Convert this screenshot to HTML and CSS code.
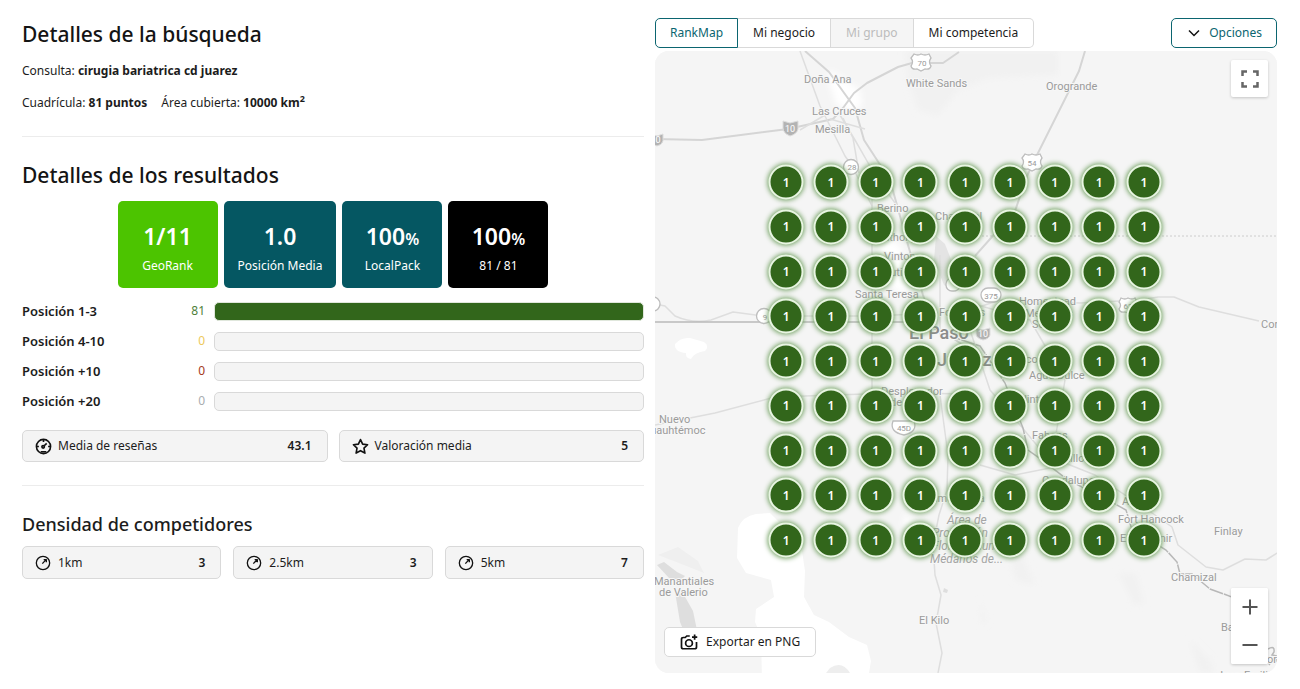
FILE: index.html
```html
<!DOCTYPE html>
<html lang="es">
<head>
<meta charset="utf-8">
<title>RankMap</title>
<meta name="viewport" content="width=device-width, initial-scale=1">
<link rel="stylesheet" href="styles.css">
</head>
<body>
<main class="page">
  <section class="details">
    <h1 class="title">Detalles de la búsqueda</h1>
    <p class="info">Consulta: <strong>cirugia bariatrica cd juarez</strong></p>
    <p class="info info-row"><span>Cuadrícula: <strong>81 puntos</strong></span><span>Área cubierta: <strong>10000 km<sup>2</sup></strong></span></p>
    <hr class="rule">
    <h2 class="title">Detalles de los resultados</h2>
    <div class="scores">
      <div class="score score-green"><div class="score-value">1/11</div><div class="score-label">GeoRank</div></div>
      <div class="score score-teal"><div class="score-value">1.0</div><div class="score-label">Posición Media</div></div>
      <div class="score score-teal"><div class="score-value">100<small>%</small></div><div class="score-label">LocalPack</div></div>
      <div class="score score-black"><div class="score-value">100<small>%</small></div><div class="score-label">81 / 81</div></div>
    </div>
    <div class="bars">
      <div class="bar-row"><strong>Posición 1-3</strong><span class="count count-green">81</span><div class="track track-full"></div></div>
      <div class="bar-row"><strong>Posición 4-10</strong><span class="count count-yellow">0</span><div class="track"></div></div>
      <div class="bar-row"><strong>Posición +10</strong><span class="count count-red">0</span><div class="track"></div></div>
      <div class="bar-row"><strong>Posición +20</strong><span class="count count-grey">0</span><div class="track"></div></div>
    </div>
    <div class="stats">
      <div class="stat">
        <svg class="icon" viewBox="0 0 24 24"><circle cx="12" cy="12" r="10"/><path d="M12 2v3.500M2 12h3.500M18.500 12H22M16.500 7.500L13 11"/><circle cx="11.500" cy="12.500" r="1.800"/><path d="M8 19.500h8"/></svg>
        <span>Media de reseñas</span><b>43.1</b>
      </div>
      <div class="stat">
        <svg class="icon" viewBox="0 0 24 24"><path d="M12 2.200l3 6.400 7 .9-5.100 4.800 1.300 7L12 17.900l-6.200 3.400 1.300-7L2 9.500l7-.9z"/></svg>
        <span>Valoración media</span><b>5</b>
      </div>
    </div>
    <hr class="rule rule-last">
    <h3 class="subtitle">Densidad de competidores</h3>
    <div class="stats stats-three">
      <div class="stat"><svg class="icon icon-thin" viewBox="0 0 24 24"><circle cx="12" cy="12" r="10"/><path d="M11 13l6-6.500M13 7h4v4"/></svg><span>1km</span><b>3</b></div>
      <div class="stat"><svg class="icon icon-thin" viewBox="0 0 24 24"><circle cx="12" cy="12" r="10"/><path d="M11 13l6-6.500M13 7h4v4"/></svg><span>2.5km</span><b>3</b></div>
      <div class="stat"><svg class="icon icon-thin" viewBox="0 0 24 24"><circle cx="12" cy="12" r="10"/><path d="M11 13l6-6.500M13 7h4v4"/></svg><span>5km</span><b>7</b></div>
    </div>
  </section>

  <section class="map-panel">
    <div class="toolbar">
      <div class="tabs">
        <button class="tab tab-active" type="button">RankMap</button><button class="tab" type="button">Mi negocio</button><button class="tab" type="button" disabled>Mi grupo</button><button class="tab" type="button">Mi competencia</button>
      </div>
      <button class="options" type="button"><svg class="chevron" viewBox="0 0 12 12"><path d="M1 3.500l5 5 5-5"/></svg>Opciones</button>
    </div>
    <div class="map">
      <svg class="map-art" viewBox="655 51 622 622">
        <defs><filter id="soft"><feGaussianBlur stdDeviation="3"/></filter></defs>
        <rect x="655" y="51" width="622" height="622" fill="#f5f5f5"/>
        <g fill="#f1f1f1" filter="url(#soft)">
          <path d="M905 51h153v24l-70 3-30 12-20 25-20-5-10-30z"/>
          <path d="M1118 573l18 0 8 30-10 2zM1000 500l20 50 15 35-20-5z"/>
          <path d="M980 600l7 20-5 5zM1190 640l20 20 5 13h-15z"/>
        </g>
        <g fill="#fff">
          <path d="M675 344q6-7 15-6l14 4q6 4 1 9-10 1-14 8-6-1-5-6-12-1-11-9z"/>
          <path d="M738 528q5-12 18-14l14-1 18 18 14 20 3 20-1 26 10 18 15 7 20 15 18 8 4 16-2 12 25 16H770l-8-8-1-45-6-14 1-13 18-12-3-17-25-7-9-15z"/>
          <path d="M830 70l30 20 2 14-8 10-18-10-8-25z" filter="url(#soft)"/>
          <path d="M905 512q3 10 15 12l-5 12-12-10zM880 235l20 10 15 40-15 10-20-20z" filter="url(#soft)"/>
        </g>
        <g fill="#dedede">
          <path d="M657 565l7-3 13 10 8 4-4 4-12-2z"/><path d="M675 592l9 3 9 16 5 24-8 11-10-24z"/>
          <path d="M678 547l20 14 6 12-20-8-26-10z" fill="#efefef"/>
          <path d="M936 236l9 8 7 18 4 30-12-7-10-25z" fill="#e4e4e4"/>
          <path d="M830 668q12-8 20 5h-24z" fill="#eee"/>
          <path d="M944 588l4 2-1 3-4-1z"/>
        </g>
        <g class="road road-wide">
          <path d="M805 51l24 21 26 36 9 32 26 40 18 65 15 50 10 30 30 20"/>
          <path d="M655 139l47 1 86-11 45-10 10-11 11-15 13-10 31-16 14-4 31 0 16-11"/>
          <path d="M1085 51l-6 20-41 82-11 23-12 35-40 45"/>
        </g>
        <g class="road">
          <path d="M840 115l15 25 20 35 25 35M800 51l20 55 25 50 7 10 20 40M843 118l10 20 6 35M800 130l30-18M830 119l35 10"/>
          <path d="M655 304l10 2 10 10q18 8 36 4l22-8 30 4 110 0 65-3"/>
          <path d="M655 425l60-12 60-16 120-4 80 1M872 175v230M940 255v80"/>
          <path d="M970 310l30-10 80 3 60-3 18-3h16l25 10 60 14"/>
          <path d="M940 395l8 60-1 35-8 25-6 30 2 30 6 20-5 28 6 30-4 20"/>
          <path d="M960 300l30 90 30 35 25 30 50 20 60 40 17 12 6 18 28 22 17 3 22-11 21 1 16-10"/>
          <path d="M980 465l35 10 50-10M960 300l70 20 35 60-10 60"/>
        </g>
        <path class="road dash" d="M970 236h307"/>
        <g class="border">
          <path d="M655 322h265"/>
          <path d="M920 322l30 14 30 10 25 37 18 45 5 22 14 10 26 20 40 20 18 10 6 20 12 6 22 14 11 12 3 12h12l18 15 22 8 4 8h10" stroke-dasharray="14 1"/>
          <path d="M1268 649q7-4 6 3l-2 3 5 1-1 5-4-1-3 5"/>
        </g>
        <g class="shield">
          <path d="M914 54q4 2 7 0 4 2 8 0l2 4q-3 4 0 8-1 4-6 3l-4 2-4-2q-5 1-6-3 3-4 0-8z"/><text x="922" y="66">70</text>
          <path d="M1025 154q4 2 7 0 4 2 8 0l2 4q-3 4 0 8-1 4-6 3l-4 2-4-2q-5 1-6-3 3-4 0-8z"/><text x="1032" y="166">54</text>
          <circle cx="851" cy="167" r="7.500"/><text x="852" y="170">28</text>
          <circle cx="764" cy="316" r="7.500"/><text x="765" y="320">9</text>
          <circle cx="653" cy="304" r="7"/>
          <rect x="981" y="288" width="20" height="14" rx="7"/><text x="991" y="299">375</text>
          <rect x="946" y="278" width="14" height="13" rx="6"/>
          <path d="M1121 298q4 2 7 0 4 2 7 0l2 4q-3 3 0 7-1 4-6 3l-3 1-3-1q-5 1-6-3 3-4 0-7z"/><text x="1128" y="309">62</text>
          <path d="M893 421h21q4 11-10 14-15-3-11-14z"/><text x="904" y="431">45D</text>
        </g>
        <g class="interstate">
          <path d="M783 121l7 2 8-2v8q-1 5-8 7-7-3-7-8z"/><text x="790" y="132">10</text>
          <path d="M976 328l7 2 7-2v7q-1 4-7 5-7-2-7-6z"/><text x="983" y="337">10</text>
          <path d="M650 134l7 2 6-2v7q-1 4-6 5-7-2-7-6z"/><text x="658" y="143">0</text>
        </g>
        <g class="place">
          <text x="804" y="83">Doña Ana</text><text x="906" y="87">White Sands</text><text x="1046" y="90">Orogrande</text>
          <text x="812" y="115">Las Cruces</text><text x="815" y="133">Mesilla</text>
          <text x="877" y="212">Berino</text><text x="935" y="220">Chaparral</text><text x="876" y="241">Anthony</text>
          <text x="884" y="260">Vinton</text><text x="871" y="276">Canutillo</text><text x="855" y="298">Santa Teresa</text>
          <text x="939" y="316">Fort Bliss</text><text x="1019" y="305">Homestead</text><text x="1025" y="317">Meadows</text><text x="1032" y="328">South</text>
          <text x="1261" y="328">Cornudas</text><text x="1013" y="363">Socorro</text><text x="1029" y="379">Agua Dulce</text>
          <text x="881" y="395">Desplegador</text><text x="890" y="406">de Sol</text><text x="1017" y="403">Clint</text>
          <text x="659" y="423">Nuevo</text><text x="643" y="434">Cuauhtémoc</text>
          <text x="1032" y="439">Fabens</text><text x="1048" y="462">Tornillo</text><text x="1042" y="484">Guadalupe</text>
          <text x="925" y="502">Samalayuca</text><text x="1122" y="505">Acala</text><text x="1118" y="523">Fort Hancock</text>
          <text x="1120" y="542">El Porvenir</text><text x="1214" y="535">Finlay</text><text x="1171" y="581">Chamizal</text>
          <text x="654" y="585">Manantiales</text><text x="659" y="596">de Valerio</text><text x="919" y="624">El Kilo</text>
          <text x="1221" y="631">Banderas</text><text x="1267" y="663">or</text><text x="1217" y="679">Juan Emilio</text>
        </g>
        <g class="place park">
          <text x="947" y="524">Área de</text><text x="932" y="537">Protección</text><text x="932" y="550">Flora y Fauna</text><text x="930" y="563">Médanos de...</text>
        </g>
        <g class="place city"><text x="909" y="339">El Paso</text><text x="937" y="366">Juárez</text></g>
      </svg>
      <div class="pins" id="pins"></div>
      <button class="map-button fullscreen" type="button" aria-label="Pantalla completa"><svg viewBox="0 0 18 18"><path d="M1.500 6V1.500H6M12 1.500h4.500V6M16.500 12v4.500H12M6 16.500H1.500V12"/></svg></button>
      <div class="zoom">
        <button class="map-button" type="button" aria-label="Acercar"><svg viewBox="0 0 18 18"><path d="M9 1.500v15M1.500 9h15"/></svg></button>
        <button class="map-button" type="button" aria-label="Alejar"><svg viewBox="0 0 18 18"><path d="M1.500 9h15"/></svg></button>
      </div>
      <button class="export" type="button"><svg class="camera" viewBox="0 0 24 24"><path d="M13 4H9L7 6H4.500Q2 6 2 8.500v10Q2 21 4.500 21h15q2.500 0 2.500-2.500V12"/><circle cx="12" cy="13.500" r="4.500"/><path d="M19.500 2v7M16 5.500h7"/></svg>Exportar en PNG</button>
    </div>
  </section>
</main>
<script src="pins.js"></script>
</body>
</html>
```
FILE: styles.css
```css
* { box-sizing: border-box; }
body { margin: 0; background: #fff; color: #1c1c1c; font-family: "Segoe UI", "Noto Sans", "Open Sans", sans-serif; font-size: 12px; line-height: 20px; }
h1, h2, h3, p { margin: 0; }
button { font: inherit; cursor: pointer; }
.page { display: grid; grid-template-columns: 1fr 1fr; gap: 11px; padding: 18px 23px 16px 22px; }
.details { min-width: 0; }
.title { font-size: 21px; font-weight: 500; line-height: 32px; color: #141414; }
.info { margin-top: 10px; line-height: 22px; }
.info-row { display: flex; flex-wrap: wrap; gap: 14px; }
.info sup { font-size: 9px; line-height: 0; vertical-align: 5px; }
.rule { height: 1px; margin: 22px 0; border: 0; background: #ececec; }
.scores { display: flex; justify-content: center; gap: 6px; margin: 10px 0 13px; }
.score { min-width: 100px; padding: 20px 14px 12px; border-radius: 5px; color: #fff; text-align: center; }
.score-green { background: #4cc400; }
.score-teal { background: #055762; }
.score-black { background: #000; }
.score-value { font-size: 23px; font-weight: 600; line-height: 30px; }
.score-value small { font-size: 16px; line-height: 1; }
.score-label { margin-top: 5px; line-height: 20px; }
.bars { display: grid; gap: 10px; }
.bar-row { display: grid; grid-template-columns: 90px 93px 1fr; align-items: center; }
.bar-row strong { font-size: 13px; font-weight: 600; white-space: nowrap; }
.count { text-align: right; }
.count-green { color: #4f7f3a; }
.count-yellow { color: #edc95c; }
.count-red { color: #a43a22; }
.count-grey { color: #a9adb0; }
.track { height: 19px; margin-left: 9px; border: 1px solid #d9d9d9; border-radius: 5px; background: #f4f4f4; }
.track-full { border-color: #e0e7dc; background: #32661b; }
.stats { display: grid; grid-template-columns: 1fr 1fr; gap: 11px; margin-top: 19px; }
.stats-three { grid-template-columns: 1fr 1fr 1fr; gap: 12px; margin-top: 8px; }
.stat { display: flex; align-items: center; gap: 6px; padding: 5px 15px 5px 12px; border: 1px solid #d9d9d9; border-radius: 5px; background: #f4f4f4; }
.stats-three .stat { gap: 7px; padding-top: 6px; }
.stat b { margin-left: auto; font-weight: 600; }
.icon { width: 17px; height: 17px; fill: none; stroke: #111; stroke-width: 2.300; stroke-linejoin: round; }
.icon-thin { width: 16px; height: 16px; stroke-width: 2; }
.rule-last { margin: 23px 0 24px; }
.subtitle { font-size: 18px; font-weight: 500; line-height: 28px; }

.toolbar { display: flex; justify-content: space-between; margin-bottom: 3px; }
.tabs { display: flex; }
.tab { height: 30px; padding: 0 15px; border: 1px solid #d9d9d9; border-left-width: 0; background: #fff; color: #1c1c1c; }
.tab:first-child { padding: 0 14px; border-radius: 5px 0 0 5px; }
.tab:last-child { border-radius: 0 5px 5px 0; }
.tab-active { border: 1px solid #0b6570; color: #0b6570; }
.tab:disabled { background: #f5f5f5; color: #bcbcbc; }
.options { display: flex; align-items: center; gap: 9px; height: 30px; padding: 0 14px 0 16px; border: 1px solid #0b6570; border-radius: 5px; background: #fff; color: #0b6570; }
.chevron { width: 12px; height: 12px; fill: none; stroke: #111; stroke-width: 1.500; }
.map { position: relative; aspect-ratio: 1; overflow: hidden; border-radius: 14px; background: #f5f5f5; }
.map-art { display: block; width: 100%; height: 100%; font-family: Roboto, sans-serif; }
.road { fill: none; stroke: #dedede; stroke-width: 1.500; stroke-linejoin: round; }
.road-wide { stroke: #d5d5d5; stroke-width: 2; }
.dash { stroke: #ccc; stroke-width: 1; stroke-dasharray: 2 2; }
.border { fill: none; stroke: #b8b8b8; stroke-width: 1.500; }
.shield { fill: #fff; stroke: #bdbdbd; stroke-width: 1.300; }
.shield text { fill: #999; stroke: none; font-size: 8px; text-anchor: middle; }
.interstate { fill: #b3b3b3; stroke: #ddd; }
.interstate text { fill: #fff; stroke: none; font-size: 9px; text-anchor: middle; }
.place { fill: #9b9b9b; stroke: #f7f7f7; stroke-width: 2; paint-order: stroke; font-size: 11px; }
.park { font-size: 12px; font-style: italic; fill: #a5a5a5; }
.city { font-size: 18px; font-weight: 500; fill: #8c8c8c; }
.pins { position: absolute; inset: 0; }
.pin { position: absolute; display: grid; place-items: center; width: 35px; height: 35px; border: 2px solid #e8f5e2; border-radius: 50%; background: #32661b; box-shadow: 0 0 5px 1px #6f9f5f; color: #fff; font-size: 12px; font-weight: 600; line-height: 16px; transform: translate(-50%, -50%); }
.map-button { display: grid; place-items: center; width: 37px; height: 37px; padding: 0; border: 0; background: #fff; }
.map-button svg { width: 18px; height: 18px; fill: none; stroke: #555; stroke-width: 2; }
.map-button.fullscreen { position: absolute; top: 9px; right: 9px; border-radius: 2px; box-shadow: 0 1px 3px #0003; }
.fullscreen svg { stroke-width: 2.500; stroke: #666; }
.zoom { position: absolute; right: 9px; bottom: 9px; border-radius: 2px; background: #fff; box-shadow: 0 1px 3px #0003; }
.zoom .map-button { height: 38px; border-radius: 2px; }
.export { position: absolute; left: 9px; bottom: 16px; display: flex; align-items: center; gap: 8px; height: 30px; padding: 0 15px; border: 1px solid #d9d9d9; border-radius: 5px; background: #fff; color: #1c1c1c; }
.camera { width: 18px; height: 18px; fill: none; stroke: #111; stroke-width: 2.300; }
```
FILE: pins.js
```js
const ranks = Array.from({ length: 9 }, () => Array(9).fill(1));
const origin = 21.1;
const step = 7.19;
const layer = document.getElementById("pins");

ranks.forEach((row, r) => {
  row.forEach((rank, c) => {
    const pin = document.createElement("div");
    pin.className = "pin";
    pin.textContent = rank;
    pin.style.left = `${origin + c * step}%`;
    pin.style.top = `${origin + r * step}%`;
    layer.append(pin);
  });
});
```
